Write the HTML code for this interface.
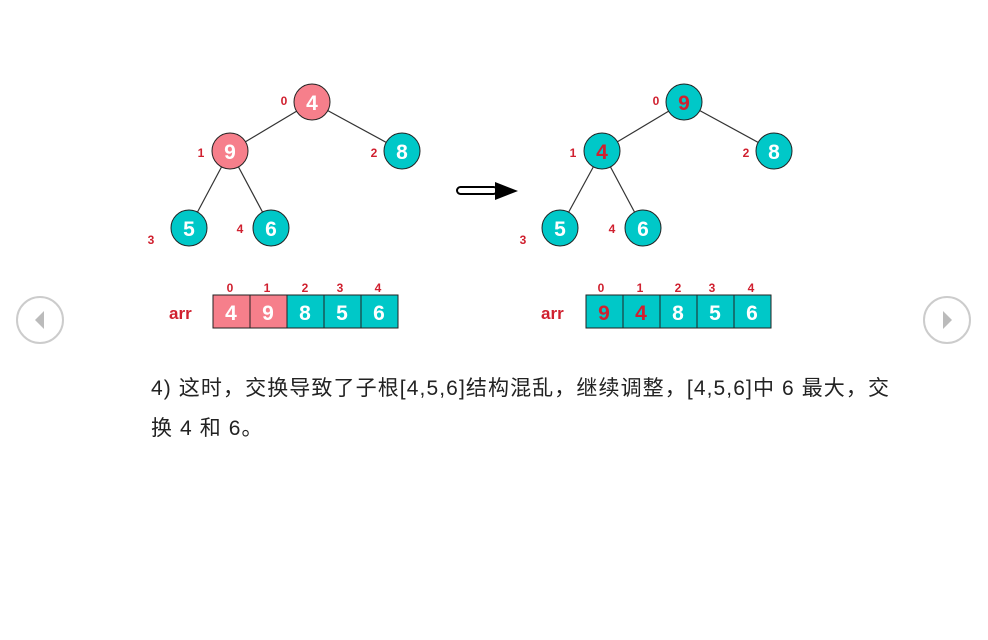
<!DOCTYPE html>
<html><head><meta charset="utf-8"><style>
body{margin:0;width:988px;height:640px;background:#fff;overflow:hidden;position:relative;font-family:"Liberation Sans","Noto Sans CJK SC",sans-serif}
svg{position:absolute;left:0;top:0}
.t{position:absolute;left:151px;top:369px;width:752px;font-size:21px;letter-spacing:1.1px;line-height:40px;color:#222}
</style></head><body>
<svg width="988" height="640" font-family="Liberation Sans, sans-serif" font-weight="bold">
<g stroke="#333" stroke-width="1.2">
<line x1="312" y1="102" x2="230" y2="151"/><line x1="312" y1="102" x2="402" y2="151"/>
<line x1="230" y1="151" x2="189" y2="228"/><line x1="230" y1="151" x2="271" y2="228"/>
<line x1="684" y1="102" x2="602" y2="151"/><line x1="684" y1="102" x2="774" y2="151"/>
<line x1="602" y1="151" x2="560" y2="228"/><line x1="602" y1="151" x2="643" y2="228"/>
</g>
<g stroke="#222" stroke-width="1">
<circle cx="312" cy="102" r="18" fill="#f67f8b"/><circle cx="230" cy="151" r="18" fill="#f67f8b"/>
<circle cx="402" cy="151" r="18" fill="#00c8c8"/><circle cx="189" cy="228" r="18" fill="#00c8c8"/><circle cx="271" cy="228" r="18" fill="#00c8c8"/>
<circle cx="684" cy="102" r="18" fill="#00c8c8"/><circle cx="602" cy="151" r="18" fill="#00c8c8"/>
<circle cx="774" cy="151" r="18" fill="#00c8c8"/><circle cx="560" cy="228" r="18" fill="#00c8c8"/><circle cx="643" cy="228" r="18" fill="#00c8c8"/>
<rect x="213" y="295" width="37" height="33" fill="#f67f8b"/><rect x="250" y="295" width="37" height="33" fill="#f67f8b"/>
<rect x="287" y="295" width="37" height="33" fill="#00c8c8"/><rect x="324" y="295" width="37" height="33" fill="#00c8c8"/><rect x="361" y="295" width="37" height="33" fill="#00c8c8"/>
<rect x="586" y="295" width="37" height="33" fill="#00c8c8"/><rect x="623" y="295" width="37" height="33" fill="#00c8c8"/>
<rect x="660" y="295" width="37" height="33" fill="#00c8c8"/><rect x="697" y="295" width="37" height="33" fill="#00c8c8"/><rect x="734" y="295" width="37" height="33" fill="#00c8c8"/>
</g>
<g font-size="21" text-anchor="middle" fill="#fff">
<text x="312" y="110">4</text><text x="230" y="159">9</text><text x="402" y="159">8</text><text x="189" y="236">5</text><text x="271" y="236">6</text>
<text x="684" y="110" fill="#d0202f">9</text><text x="602" y="159" fill="#d0202f">4</text><text x="774" y="159">8</text><text x="560" y="236">5</text><text x="643" y="236">6</text>
<text x="231" y="320">4</text><text x="268" y="320">9</text><text x="305" y="320">8</text><text x="342" y="320">5</text><text x="379" y="320">6</text>
<text x="604" y="320" fill="#d0202f">9</text><text x="641" y="320" fill="#d0202f">4</text><text x="678" y="320">8</text><text x="715" y="320">5</text><text x="752" y="320">6</text>
</g>
<g font-size="12" text-anchor="middle" fill="#d0202f">
<text x="284" y="105">0</text><text x="201" y="157">1</text><text x="374" y="157">2</text><text x="151" y="244">3</text><text x="240" y="233">4</text>
<text x="656" y="105">0</text><text x="573" y="157">1</text><text x="746" y="157">2</text><text x="523" y="244">3</text><text x="612" y="233">4</text>
<text x="230" y="292">0</text><text x="267" y="292">1</text><text x="305" y="292">2</text><text x="340" y="292">3</text><text x="378" y="292">4</text>
<text x="601" y="292">0</text><text x="640" y="292">1</text><text x="678" y="292">2</text><text x="712" y="292">3</text><text x="751" y="292">4</text>
</g>
<g font-size="17" fill="#d0202f"><text x="169" y="319">arr</text><text x="541" y="319">arr</text></g>
<rect x="457" y="187" width="40" height="7" rx="3.5" fill="#fff" stroke="#000" stroke-width="2"/>
<polygon points="495,182 518,191 495,200" fill="#000"/>
<circle cx="40" cy="320" r="23" fill="#fff" stroke="#ccc" stroke-width="2"/>
<polygon points="44,311 35,320 44,329" fill="#bbb"/>
<circle cx="947" cy="320" r="23" fill="#fff" stroke="#ccc" stroke-width="2"/>
<polygon points="943,311 952,320 943,329" fill="#bbb"/>
</svg>
<div class="t">4) 这时，交换导致了子根[4,5,6]结构混乱，继续调整，[4,5,6]中 6 最大，交换 4 和 6。</div>
</body></html>
